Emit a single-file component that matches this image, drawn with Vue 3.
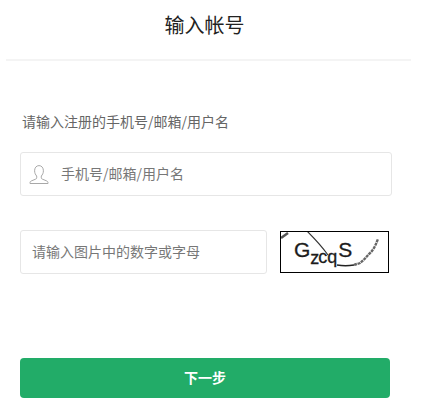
<script setup>
const title = '输入帐号'
</script>

<template>
  <div class="page">
    <header class="head">
      <h1 class="title">{{ title }}</h1>
    </header>
    <form class="form" @submit.prevent>
      <p class="label">请输入注册的手机号/邮箱/用户名</p>
      <div class="field account">
        <svg class="user" width="20" height="19" viewBox="0 0 20 19" fill="none" stroke="#a8a8a8" stroke-width="1">
          <path d="M10 .6C7.300.6 5.600 2.800 5.600 5.800c0 2.200.9 4 2.100 5.200v1.800c0 .6-.3 1-1 1.300l-4.500 1.900c-.8.4-1.200 1-1.200 1.600v.9h18v-.9c0-.6-.4-1.200-1.200-1.600l-4.500-1.900c-.7-.3-1-.7-1-1.300V11c1.200-1.200 2.100-3 2.100-5.200C14.400 2.800 12.700.6 10 .6z" />
        </svg>
        <span class="placeholder">手机号/邮箱/用户名</span>
      </div>
      <div class="captcha-row">
        <div class="field code">
          <span class="placeholder">请输入图片中的数字或字母</span>
        </div>
        <svg class="captcha" width="109" height="42" viewBox="0 0 109 42">
          <rect x=".5" y=".5" width="108" height="41" fill="#fff" />
          <path d="M1 7 8 2" stroke="#555" stroke-width="2.500" fill="none" />
          <path d="M27 0C33 6 41 14 48 24" stroke="#333" stroke-width="1.100" fill="none" />
          <path d="M57 34c6 1 11 1 17 0" stroke="#222" stroke-width="1.500" fill="none" />
          <path d="M74 34c2-1 4-1 6-2 4-3 7-7 11-11 3-3 5-8 7-13" stroke="#666" stroke-width="2.400" stroke-dasharray="3 .7" fill="none" />
          <text class="cap" x="14" y="26"><tspan class="big">G</tspan><tspan dy="7">z</tspan><tspan dx="-1" dy="-1">c</tspan><tspan>q</tspan><tspan class="big" dx="1" dy="-6">S</tspan></text>
          <rect x=".5" y=".5" width="108" height="41" fill="none" stroke="#000" />
        </svg>
      </div>
      <button class="next" type="submit"><span class="next-text">下一步</span></button>
    </form>
  </div>
</template>

<style>
html, body { margin: 0; background: #fff; }
</style>

<style scoped>
.page {
  width: 429px;
  height: 417px;
  overflow: hidden;
  box-sizing: border-box;
  font-family: "Noto Sans CJK SC", "Liberation Sans", sans-serif;
  background: #fff;
}
.head {
  margin: 0 18px 0 6px;
  height: 61px;
  box-sizing: border-box;
  border-bottom: 2px solid #f4f4f4;
}
.title {
  margin: 0;
  padding: 11px 8px 0 0;
  text-align: center;
  font-size: 20px;
  line-height: 28px;
  font-weight: 400;
  color: #222;
}
.form {
  padding: 0 37px 0 20px;
}
.label {
  margin: 50px 0 0 2px;
  height: 41px;
  font-size: 14px;
  line-height: 20px;
  color: #666;
}
.field {
  display: flex;
  align-items: center;
  box-sizing: border-box;
  height: 44px;
  border: 1px solid #e6e6e6;
  border-radius: 3px;
  background: #fff;
}
.account {
  padding-left: 8px;
}
.user {
  flex: none;
}
.account .placeholder {
  margin-left: 12px;
}
.placeholder {
  padding-bottom: 2px;
  font-size: 14px;
  color: #777;
}
.captcha-row {
  display: flex;
  align-items: center;
  margin-top: 34px;
}
.code {
  flex: none;
  width: 247px;
  padding-left: 11px;
}
.captcha {
  display: block;
  flex: none;
  margin-left: 13px;
}
.cap {
  font-family: "Liberation Sans", sans-serif;
  font-size: 18px;
  fill: #1c1c1c;
  stroke: #1c1c1c;
  stroke-width: .3px;
}
.big {
  font-size: 21px;
}
.next {
  display: block;
  width: 370px;
  height: 40px;
  margin-top: 84px;
  padding: 0 0 2px;
  border: 0;
  border-radius: 4px;
  background: #22ac68;
  color: #fff;
  font: 700 14px "Noto Sans CJK SC", "Liberation Sans", sans-serif;
}
</style>
